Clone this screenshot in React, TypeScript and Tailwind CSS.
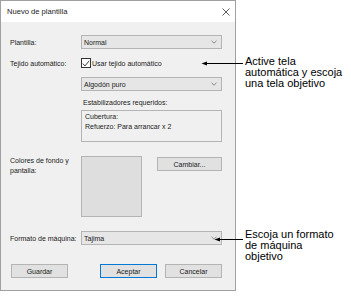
import React from 'react';

const Chevron = () => (
  <svg width="6" height="4" viewBox="0 0 6 4" className="shrink-0">
    <path d="M0.5 0.8 L3 3.2 L5.5 0.8" fill="none" stroke="#707070" strokeWidth="0.8" />
  </svg>
);

const Select = ({ value }: { value: string }) => (
  <div className="flex h-[14px] items-center justify-between border border-[#b4b4b4] bg-[#e6e6e6] pl-[2px] pr-[4px]">
    <span>{value}</span>
    <Chevron />
  </div>
);

const Button = ({ label, primary }: { label: string; primary?: boolean }) => (
  <div
    className={`flex h-[14px] w-[57px] items-center justify-center bg-[#e1e1e1] border ${
      primary ? 'border-[#0078d7]' : 'border-[#b4b4b4]'
    }`}
  >
    {label}
  </div>
);

const App = () => {
  return (
    <div className="relative h-[298px] w-[351px] bg-white text-[7px] leading-[9px] text-[#1a1a1a] [font-family:'Liberation_Sans',Arial,sans-serif]">
      {/* Dialog */}
      <div className="flex h-[291px] w-[236px] flex-col border border-[#a0a0a0]">
        <div className="flex h-[21px] items-center justify-between bg-white pl-[6px] pr-[5px] text-[7.6px]">
          <span>Nuevo de plantilla</span>
          <svg width="8" height="8" viewBox="0 0 8 8">
            <path d="M0.5 0.5 L7.5 7.5 M7.5 0.5 L0.5 7.5" stroke="#333" strokeWidth="0.8" />
          </svg>
        </div>

        <div className="flex flex-1 flex-col bg-[#f0f0f0] pl-[9px] pr-[13px] pt-[13px]">
          <div className="flex items-center">
            <span className="w-[71px]">Plantilla:</span>
            <div className="flex-1">
              <Select value="Normal" />
            </div>
          </div>

          <div className="mt-[9px] flex h-[10px] items-center">
            <span className="w-[71px]">Tejido automático:</span>
            <div className="flex items-center gap-[1px]">
              <div className="flex h-[10px] w-[10px] items-center justify-center border border-[#333] bg-white">
                <svg width="8" height="7" viewBox="0 0 8 7">
                  <path d="M0.8 3.6 L3 5.9 L7.2 0.8" fill="none" stroke="#222" strokeWidth="0.9" />
                </svg>
              </div>
              <span>Usar tejido automático</span>
            </div>
          </div>

          <div className="ml-[71px] mt-[9px]">
            <Select value="Algodón puro" />
          </div>

          <div className="ml-[73px] mt-[7px]">Estabilizadores requeridos:</div>

          <div className="ml-[71px] mt-[3px] h-[32px] border border-[#b4b4b4] pl-[3px] pt-[1px] leading-[10px]">
            <div>Cubertura:</div>
            <div>Refuerzo: Para arrancar x 2</div>
          </div>

          <div className="mt-[14px] flex items-start">
            <span className="w-[71px] leading-[9.5px]">
              Colores de fondo y
              <br />
              pantalla:
            </span>
            <div className="h-[61px] w-[61px] border border-[#b4b4b4] bg-[#dedede]" />
            <div className="ml-auto mt-[1px] flex h-[14px] w-[65px] items-center justify-center border border-[#b4b4b4] bg-[#e1e1e1]">
              Cambiar...
            </div>
          </div>

          <div className="mt-[14px] flex items-center">
            <span className="w-[71px]">Formato de máquina:</span>
            <div className="flex-1">
              <Select value="Tajima" />
            </div>
          </div>

          <div className="mt-[19px] flex items-center">
            <div className="ml-[1px]">
              <Button label="Guardar" />
            </div>
            <div className="ml-auto flex gap-[8px]">
              <Button label="Aceptar" primary />
              <Button label="Cancelar" />
            </div>
          </div>
        </div>
      </div>

      {/* Callout lines */}
      <svg className="pointer-events-none absolute left-0 top-0" width="351" height="298">
        <line x1="205" y1="63.5" x2="243" y2="63.5" stroke="#000" strokeWidth="1" />
        <path d="M201.5 63.5 L207 61.5 L207 65.5 Z" fill="#000" />
        <line x1="218" y1="239.5" x2="243" y2="239.5" stroke="#000" strokeWidth="1" />
        <path d="M214.5 239.5 L220 237.5 L220 241.5 Z" fill="#000" />
      </svg>

      <div className="absolute left-[245px] top-[56px] whitespace-nowrap text-[11px] leading-[11px] text-black">
        Active tela
        <br />
        automática y escoja
        <br />
        una tela objetivo
      </div>
      <div className="absolute left-[245px] top-[229px] whitespace-nowrap text-[11px] leading-[11px] text-black">
        Escoja un formato
        <br />
        de máquina
        <br />
        objetivo
      </div>
    </div>
  );
};

export default App;
